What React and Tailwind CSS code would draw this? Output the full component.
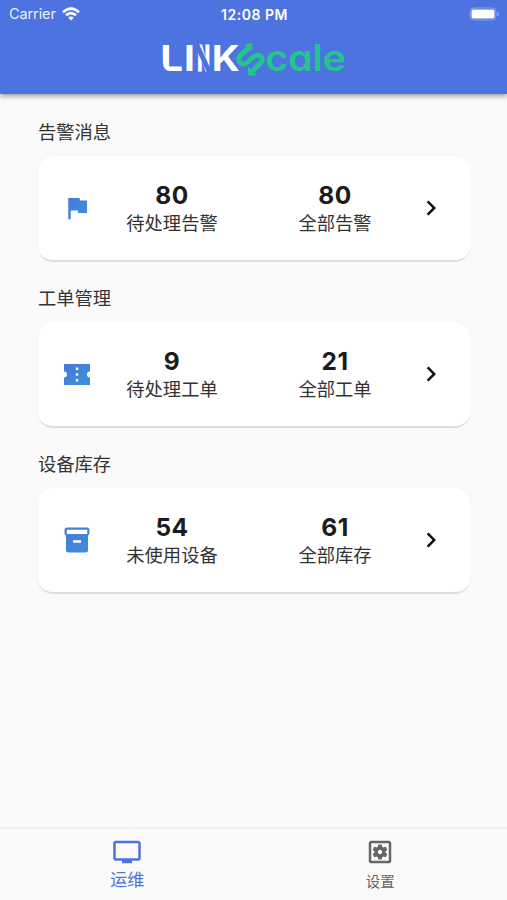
import React from "react";
import { MdFlag, MdChevronRight, MdTv, MdOutlineSettingsApplications } from "react-icons/md";

const TicketIcon = ({ className }) => (
  <svg viewBox="0 0 26 21" className={className}>
    <path
      fillRule="evenodd"
      d="M0 0h26v7.500a3 3 0 0 0 0 6V21H0v-7.500a3 3 0 0 0 0-6zM11.800 3.500V6h2.500V3.500zM11.800 9.300v2.500h2.500V9.300zM11.800 15v2.500h2.500V15z"
    />
  </svg>
);

const InventoryIcon = ({ className }) => (
  <svg viewBox="0 0 26 26" className={className}>
    <path
      fillRule="evenodd"
      d="M3 .5h20a2.5 2.5 0 0 1 2.5 2.5v3A2.5 2.5 0 0 1 24 8.500v14.500a2.500 2.500 0 0 1-2.500 2.500H4.500A2.500 2.500 0 0 1 2 23V8.500A2.500 2.500 0 0 1 .5 6v-3A2.500 2.500 0 0 1 3 .5zM2.800 2.700v4.300h20.400v-4.300zM9 13.200V15.700h8v-2.500z"
    />
  </svg>
);

const sections = [
  {
    title: "告警消息",
    icon: MdFlag,
    iconClass: "h-[30px] w-[30px]",
    stats: [
      { value: 80, label: "待处理告警" },
      { value: 80, label: "全部告警" },
    ],
  },
  {
    title: "工单管理",
    icon: TicketIcon,
    iconClass: "h-[21px] w-[26px]",
    stats: [
      { value: 9, label: "待处理工单" },
      { value: 21, label: "全部工单" },
    ],
  },
  {
    title: "设备库存",
    icon: InventoryIcon,
    iconClass: "h-[26px] w-[26px]",
    stats: [
      { value: 54, label: "未使用设备" },
      { value: 61, label: "全部库存" },
    ],
  },
];

const StatusBar = () => (
  <div className="grid h-7 grid-cols-3 items-center pl-[9px] pr-[7px] text-white">
    <div className="flex items-center gap-[6px]">
      <span className="text-[14.5px] tracking-[-0.1px] opacity-90">Carrier</span>
      <svg viewBox="0 0 18 14" className="h-[14px] w-[18px]" fill="none" stroke="white" strokeWidth="2.5">
        <path d="M1 5.200Q9-2 17 5.200" />
        <path d="M4 8.300Q9 4 14 8.300" />
        <path d="M9 13.500 6.200 10.700Q9 8.400 11.800 10.700Z" fill="white" stroke="none" />
      </svg>
    </div>
    <span className="text-center text-[14px] font-semibold tracking-[0.5px]">12:08 PM</span>
    <svg viewBox="0 0 31 14" className="h-[14px] w-[31px] justify-self-end">
      <rect x="1" y="1" width="26" height="12" rx="4" fill="none" stroke="white" strokeOpacity=".35" />
      <rect x="2.500" y="2.500" width="23" height="9" rx="2" fill="white" />
      <path d="M28.500 4.500q2.500 2.500 0 5z" fill="white" fillOpacity=".5" />
    </svg>
  </div>
);

const Logo = () => (
  <svg
    viewBox="0 0 188 56"
    className="h-14 w-[188px] overflow-visible [font-feature-settings:'cv11']"
    fontFamily="Inter, sans-serif"
  >
    <g fill="white" fontWeight="700" fontSize="36">
      <text transform="translate(.3 39) scale(1.120 1)">L</text>
      <text transform="translate(24 39) scale(1.080 1)">I</text>
      <text transform="translate(37.500 39) scale(.44 1)" fontWeight="900" stroke="white" strokeWidth="1">N</text>
      <text transform="translate(51.800 39) scale(1.080 1)">K</text>
    </g>
    {/* stencil cuts */}
    <path d="M1.500 31v9.500h9V39.300Q3 38.500 3 31z" fill="#4c73df" />
    <path d="M36.500 12 51 43.500" stroke="#4c73df" strokeWidth="4.800" />
    <g stroke="#22c58b" fill="none" strokeWidth="5" strokeLinejoin="round">
      <path d="M89 16 81.500 22.500C76 27 80 33.500 85.500 31.500C89 30 91 26 95.500 23.800C101 21.500 104.500 27 100.500 31L92 39.500" />
      <path d="M85 12.500 92 11.500 92 18.500zM88.500 35.500v7.500h7z" fill="#22c58b" strokeWidth="1" />
    </g>
    <text transform="translate(105.300 39) scale(1.060 1)" fill="#22c58b" fontWeight="600" fontSize="37">
      cale
    </text>
  </svg>
);

const Card = ({ section }) => {
  const Icon = section.icon;
  return (
    <section className="mb-[23px]">
      <h2 className="mb-[11px] h-[26px] text-[18.3px] leading-[26px] text-[#333]">{section.title}</h2>
      <div className="flex h-[106px] items-center rounded-[15px] border-b-2 border-[#dedede] bg-white shadow-[0_0_2px_rgba(0,0,0,0.05)]">
        <div className="flex w-[77px] justify-center">
          <Icon className={`${section.iconClass} fill-[url(#blue)]`} />
        </div>
        <div className="flex gap-[49px] pt-[2px]">
          {section.stats.map((stat) => (
            <div key={stat.label} className="flex w-[114px] flex-col items-center">
              <span className="text-[24.500px] leading-7 font-bold tracking-[0.5px] text-[#1c1c1c]">{stat.value}</span>
              <span className="text-[18.3px] leading-7 whitespace-nowrap text-[#333]">{stat.label}</span>
            </div>
          ))}
        </div>
        <MdChevronRight className="ml-6 h-[30px] w-[30px] text-[#111]" />
      </div>
    </section>
  );
};

const App = () => {
  return (
    <div className="flex h-screen flex-col bg-[#fafafa] font-[Inter,'Noto_Sans_CJK_SC',sans-serif]">
      <svg className="absolute h-0 w-0">
        <defs>
          <linearGradient id="blue" x1="0" y1="0" x2="1" y2="1">
            <stop offset="0" stopColor="#4878dc" />
            <stop offset="1" stopColor="#3d91d5" />
          </linearGradient>
        </defs>
      </svg>
      <header className="h-[94px] bg-[#4c73df] shadow-[0_2px_5px_rgba(0,0,0,0.4)]">
        <StatusBar />
        <div className="flex justify-center pt-1">
          <Logo />
        </div>
      </header>

      <main className="flex-1 pt-[25px] pr-[37px] pl-[38px]">
        {sections.map((section) => (
          <Card key={section.title} section={section} />
        ))}
      </main>

      <nav className="grid h-[73px] grid-cols-2 border-t-2 border-[#f1f1f1]">
        <div className="flex flex-col items-center pt-2 pl-px text-[#4c73df]">
          <MdTv className="h-[30px] w-[30px]" />
          <span className="pt-px text-[17px] leading-6">运维</span>
        </div>
        <div className="flex flex-col items-center pt-2 text-[#666]">
          <MdOutlineSettingsApplications className="h-[30px] w-[30px]" />
          <span className="pt-px text-[14.5px] leading-[27px]">设置</span>
        </div>
      </nav>
    </div>
  );
};

export default App;
